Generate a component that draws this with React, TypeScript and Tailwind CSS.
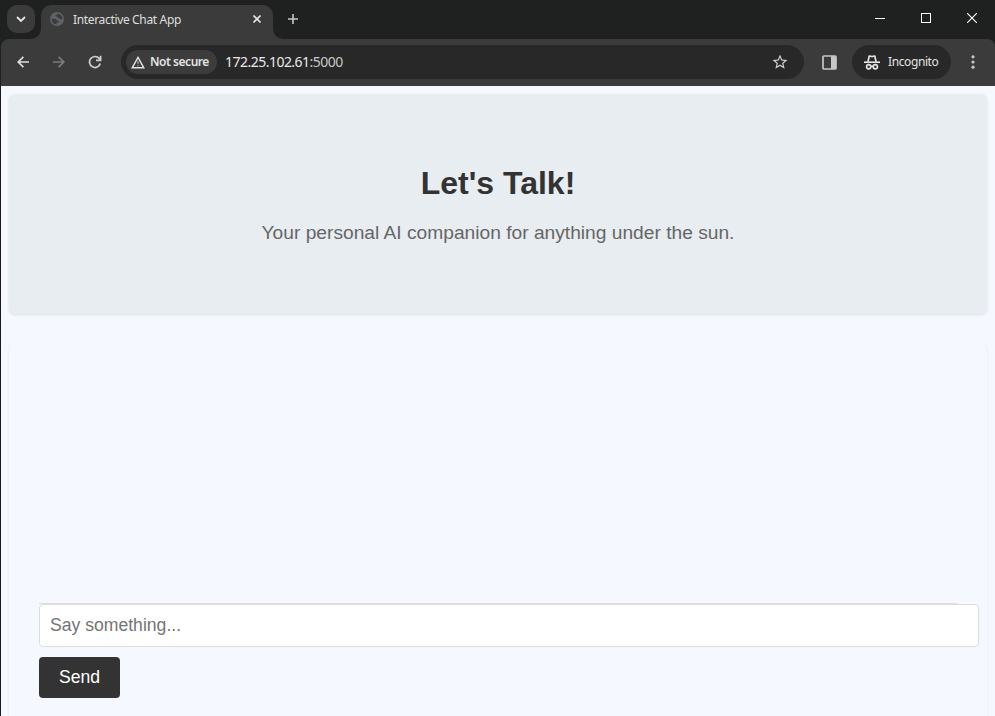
import React from "react";
import { MdStarOutline } from "react-icons/md";

const ui = "font-['Noto_Sans','Open_Sans',sans-serif]";

function Globe() {
  return (
    <svg width="14" height="14" viewBox="0 0 14 14" className="ml-[9px] shrink-0">
      <circle cx="7" cy="7" r="7" fill="#5f6368" />
      <path d="M1.5 6.8h3.2c1.6 0 2 .9 2 2h2v1.6H6.6v2.1A5.6 5.6 0 0 1 1.5 6.8z" fill="#3b3b3b" />
      <path d="M7.3 1.5v1.4H5.6v1.6h1.7v1.2h2.2v1.5h3.1A5.6 5.6 0 0 0 7.3 1.5z" fill="#3b3b3b" />
    </svg>
  );
}

function TabStrip() {
  return (
    <div className="flex h-[39px] items-start bg-[#1f2120]">
      <div className="ml-[7px] mt-[5px] flex h-7 w-7 items-center justify-center rounded-[10px] bg-[#3b3b3b]">
        <svg width="10" height="6" viewBox="0 0 10 6" fill="none" stroke="#e6e6e6" strokeWidth="1.8">
          <path d="M1 1l4 4 4-4" />
        </svg>
      </div>
      <div className="relative ml-[6px] mt-[5px] flex h-[34px] w-[232px] items-center rounded-t-[10px] bg-[#3b3b3b] pb-[6px]">
        <svg width="10" height="10" className="absolute -left-[10px] bottom-0" fill="#3b3b3b">
          <path d="M10 0v10H0A10 10 0 0 0 10 0z" />
        </svg>
        <svg width="10" height="10" className="absolute -right-[10px] bottom-0" fill="#3b3b3b">
          <path d="M0 0v10h10A10 10 0 0 1 0 0z" />
        </svg>
        <Globe />
        <span className="ml-[9px] mt-[2px] whitespace-nowrap text-[12px] leading-4 tracking-[-0.34px] text-[#dfdfdf]">Interactive Chat App</span>
        <svg width="8" height="8" viewBox="0 0 8 8" className="ml-auto mr-[12px]" stroke="#e3e3e3" strokeWidth="1.6">
          <path d="M.5.5l7 7M7.5.5l-7 7" />
        </svg>
      </div>
      <svg width="10" height="10" viewBox="0 0 10 10" className="ml-[15px] mt-[14px]" stroke="#c7c7c7" strokeWidth="1.6">
        <path d="M5 0v10M0 5h10" />
      </svg>
      <div className="ml-auto mr-[18px] mt-[13px] flex gap-[36px]">
        <svg width="10" height="10" viewBox="0 0 10 10" stroke="#fff" shapeRendering="crispEdges"><path d="M0 5.5h10" /></svg>
        <svg width="10" height="10" viewBox="0 0 10 10" stroke="#fff" fill="none" shapeRendering="crispEdges"><path d="M.5.5h9v9h-9z" /></svg>
        <svg width="10" height="10" viewBox="0 0 10 10" stroke="#fff" strokeWidth="1.1"><path d="M0 0l10 10M10 0L0 10" /></svg>
      </div>
    </div>
  );
}

function Incognito() {
  return (
    <svg width="16" height="15" viewBox="0 0 16 15" fill="none" stroke="#e3e3e3" strokeWidth="1.7">
      <path d="M0 7.2h16" />
      <path d="M3.9 6.8L5.2 1.2c1.2-.5 1.8.4 2.8.4s1.6-.9 2.8-.4l1.3 5.6" />
      <circle cx="4.7" cy="11.8" r="2.1" />
      <circle cx="11.3" cy="11.8" r="2.1" />
      <path d="M6.6 11.4q1.4-.8 2.8 0" />
    </svg>
  );
}

function Toolbar() {
  return (
    <div className="bg-[#1f2120] pl-px">
      <div className="flex h-[47px] items-center rounded-t-[8px] bg-[#3b3b3b] pb-px">
        <svg width="12" height="12" viewBox="0 0 12 12" fill="none" stroke="#dedede" strokeWidth="1.7" className="ml-[16px] shrink-0">
          <path d="M12 6H1.4M6.4 .8L1.2 6l5.2 5.2" />
        </svg>
        <svg width="12" height="12" viewBox="0 0 12 12" fill="none" stroke="#7c7c7c" strokeWidth="1.7" className="ml-[24px] shrink-0">
          <path d="M0 6h10.6M5.6 .8L10.8 6l-5.2 5.2" />
        </svg>
        <svg width="14" height="14" viewBox="0 0 14 14" fill="none" stroke="#d0d0d0" strokeWidth="1.7" className="ml-[23px] shrink-0">
          <path d="M12.3 8.6A5.5 5.5 0 1 1 11.2 3.4L12.2 4.6" />
          <path d="M12.6 .8v4.6H8" />
        </svg>
        <div className="ml-[19px] flex h-[34px] flex-1 items-center rounded-full bg-[#282828] pl-[5px] pr-[15px]">
          <div className="flex h-6 w-[91px] items-center rounded-full bg-[#3c3c3c] pl-[5px]">
            <svg width="14" height="13" viewBox="0 0 14 13" fill="none" stroke="#e3e3e3" strokeWidth="1.4">
              <path d="M7 1.4L12.8 11.8H1.2z" />
              <path d="M7 5v3.2M7 9.2v1.3" strokeWidth="1.2" stroke="#a8a8a8" />
            </svg>
            <span className="ml-[5px] whitespace-nowrap text-[12px] font-semibold tracking-[-0.46px] text-[#e3e3e3]">Not secure</span>
          </div>
          <span className="ml-[8px] whitespace-nowrap pb-[2px] text-[14px] tracking-[-0.52px] text-[#e8e8e8]">172.25.102.61<span className="text-[#c7c7c7]">:5000</span></span>
          <MdStarOutline className="ml-auto h-[18px] w-[18px] text-[#cfcfcf]" />
        </div>
        <svg width="15" height="15" viewBox="0 0 15 15" className="ml-[18px] shrink-0">
          <rect x="1" y="1" width="13" height="13" rx="1" fill="none" stroke="#c7c7c7" strokeWidth="1.7" />
          <path d="M9 1h5v13H9z" fill="#c7c7c7" />
        </svg>
        <div className="ml-[15px] flex h-[34px] w-[99px] items-center rounded-full bg-[#282828] pl-[12px]">
          <Incognito />
          <span className="ml-[8px] text-[12px] tracking-[-0.4px] text-[#e3e3e3]">Incognito</span>
        </div>
        <svg width="4" height="14" viewBox="0 0 4 14" fill="#c7c7c7" className="ml-[20px] mr-[20px] shrink-0">
          <circle cx="2" cy="1.8" r="1.6" />
          <circle cx="2" cy="7" r="1.6" />
          <circle cx="2" cy="12.2" r="1.6" />
        </svg>
      </div>
    </div>
  );
}

export default function App() {
  return (
    <div className="flex h-[716px] w-[995px] flex-col overflow-hidden bg-[#f5f8ff]">
      <header className={ui}>
        <TabStrip />
        <Toolbar />
      </header>
      <main className="flex-1 border-l border-[#1b191a] p-2 font-['Liberation_Sans',Arial,sans-serif]">
        <section className="h-[220px] rounded-[6px] bg-[#e8edf1] pt-[71px] text-center shadow-[0_1px_3px_rgba(0,0,0,0.1)]">
          <h1 className="text-[32px] font-bold leading-[37px] text-[#333]">Let's Talk!</h1>
          <p className="mt-[20px] text-[19.2px] leading-[22px] text-[#666]">Your personal AI companion for anything under the sun.</p>
        </section>
        <section className="mt-7 h-[400px] rounded-[8px] px-[30px] pt-[261px] shadow-[0_1px_3px_rgba(0,0,0,0.07)]">
          <div className="h-px bg-[#ddd]" />
          <input
            className="block h-[43px] w-[940px] rounded-[4px] border border-[#ddd] bg-white px-[10px] text-[17.6px] text-[#333] outline-none placeholder:text-[#757575]"
            placeholder="Say something..."
          />
          <button className="mt-[10px] block h-[41px] w-[81px] rounded-[4px] bg-[#333] text-[17.6px] text-white">Send</button>
        </section>
      </main>
    </div>
  );
}
